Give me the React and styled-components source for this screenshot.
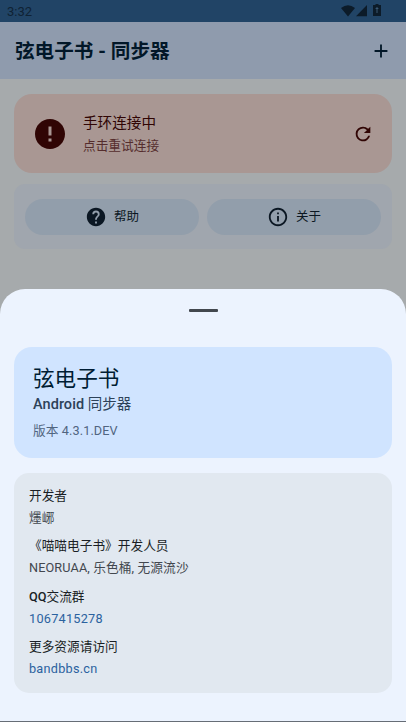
import React from "react";
import styled, { createGlobalStyle } from "styled-components";

const App = () => {
  return (
    <>
      <GlobalStyle />
      <Screen>
        <StatusBar>
          <Clock>3:32</Clock>
          <StatusIcons>
            <svg width="14" height="12" viewBox="0 0 14 12">
              <path d="M0 3Q7-2.6 14 3L7 11.5z" />
            </svg>
            <svg width="11" height="12" viewBox="0 0 11 12">
              <path d="M11 0v11.3H0z" />
            </svg>
            <BatteryIcon width="8" height="12" viewBox="0 0 8 12">
              <path d="M2.5 0h3v1H8v11H0V1h2.5z" />
              <path d="M4 3v6M2.6 4.5h2.8" stroke="#3a5873" fill="none" />
            </BatteryIcon>
          </StatusIcons>
        </StatusBar>
        <AppBar>
          <Title>弦电子书 - 同步器</Title>
          <svg width="22" height="22" viewBox="0 0 24 24">
            <path d="M19 13h-6v6h-2v-6H5v-2h6V5h2v6h6z" />
          </svg>
        </AppBar>
        <Content>
          <ErrorCard>
            <svg width="36" height="36" viewBox="0 0 24 24">
              <path d="M12 2C6.48 2 2 6.48 2 12s4.48 10 10 10 10-4.48 10-10S17.52 2 12 2zm1 15h-2v-2h2v2zm0-4h-2V7h2v6z" />
            </svg>
            <ErrorText>
              <ErrorTitle>手环连接中</ErrorTitle>
              <ErrorHint>点击重试连接</ErrorHint>
            </ErrorText>
            <svg width="22" height="22" viewBox="0 0 24 24">
              <path d="M17.65 6.35A7.958 7.958 0 0 0 12 4a8 8 0 1 0 7.73 10h-2.08A5.99 5.99 0 0 1 12 18a6 6 0 1 1 0-12c1.66 0 3.14.69 4.22 1.78L13 11h7V4z" />
            </svg>
          </ErrorCard>
          <ActionCard>
            <ActionButton>
              <svg width="22" height="22" viewBox="0 0 24 24">
                <path d="M12 2C6.48 2 2 6.48 2 12s4.48 10 10 10 10-4.48 10-10S17.52 2 12 2zm1 17h-2v-2h2v2zm2.07-7.75l-.9.92C13.45 12.9 13 13.5 13 15h-2v-.5c0-1.1.45-2.1 1.17-2.83l1.24-1.26c.37-.36.59-.86.59-1.41a2 2 0 1 0-4 0H8a4 4 0 1 1 8 0c0 .88-.36 1.68-.93 2.25z" />
              </svg>
              <ActionLabel>帮助</ActionLabel>
            </ActionButton>
            <ActionButton>
              <svg width="22" height="22" viewBox="0 0 24 24">
                <path d="M11 7h2v2h-2zm0 4h2v6h-2zm1-9C6.48 2 2 6.48 2 12s4.48 10 10 10 10-4.48 10-10S17.52 2 12 2zm0 18c-4.41 0-8-3.59-8-8s3.59-8 8-8 8 3.59 8 8-3.59 8-8 8z" />
              </svg>
              <ActionLabel>关于</ActionLabel>
            </ActionButton>
          </ActionCard>
        </Content>
        <Sheet>
          <Handle />
          <AppCard>
            <AppName>弦电子书</AppName>
            <AppKind>
              <Medium>Android</Medium> 同步器
            </AppKind>
            <Version>版本 4.3.1.DEV</Version>
          </AppCard>
          <InfoCard>
            <Label>开发者</Label>
            <Value>爅峫</Value>
            <Label>《喵喵电子书》开发人员</Label>
            <Value>NEORUAA, 乐色桶, 无源流沙</Value>
            <Label>
              <Medium>QQ</Medium>交流群
            </Label>
            <Value $link>1067415278</Value>
            <Label>更多资源请访问</Label>
            <Value $link>bandbbs.cn</Value>
          </InfoCard>
        </Sheet>
        <NavEdge />
      </Screen>
    </>
  );
};

export default App;

const GlobalStyle = createGlobalStyle`
  * {
    box-sizing: border-box;
  }
  body {
    margin: 0;
    font-family: Roboto, "Noto Sans CJK SC", sans-serif;
  }
  svg {
    display: block;
    flex-shrink: 0;
    fill: currentColor;
  }
`;
const Screen = styled.div`
  width: 406px;
  height: 722px;
  overflow: hidden;
  display: flex;
  flex-direction: column;
  background: #a6aaac;
`;
const StatusBar = styled.div`
  height: 22px;
  flex-shrink: 0;
  padding: 0 25px 0 7px;
  display: flex;
  justify-content: space-between;
  background: #214466;
  color: #0c1b29;
`;
const Clock = styled.span`
  font-size: 13px;
  line-height: 23px;
  color: #0f2234;
`;
const StatusIcons = styled.div`
  display: flex;
  align-items: flex-start;
  gap: 1px;
  padding-top: 5px;
`;
const BatteryIcon = styled.svg`
  margin: -1px 0 0 5px;
`;
const AppBar = styled.header`
  height: 57px;
  flex-shrink: 0;
  padding: 0 14px 0 15px;
  display: flex;
  align-items: center;
  justify-content: space-between;
  background: #8f9bad;
  color: #021728;
`;
const Title = styled.h1`
  margin: 0;
  padding-top: 2px;
  font-size: 19.6px;
  line-height: 28px;
  font-weight: 700;
`;
const Content = styled.main`
  height: 210px;
  flex-shrink: 0;
  padding: 15px 14px 0;
`;
const ErrorCard = styled.section`
  height: 79px;
  padding: 0 18px;
  border-radius: 18px;
  display: flex;
  align-items: center;
  background: #a99793;
  color: #300504;
`;
const ErrorText = styled.div`
  flex: 1;
  padding-left: 15px;
`;
const ErrorTitle = styled.div`
  padding-top: 1px;
  font-size: 14.6px;
  line-height: 23px;
`;
const ErrorHint = styled.div`
  font-size: 12.7px;
  line-height: 22px;
  color: #552d2d;
`;
const ActionCard = styled.section`
  height: 65px;
  margin-top: 11px;
  padding: 15px 11px 14px;
  border-radius: 11px;
  display: flex;
  gap: 8px;
  background: #a0a6ae;
`;
const ActionButton = styled.button`
  flex: 1;
  padding: 0;
  border: 0;
  border-radius: 18px;
  display: flex;
  align-items: center;
  justify-content: center;
  gap: 7px;
  background: #929eab;
  color: #0b1723;
  font-family: inherit;
  font-size: 12.5px;
`;
const ActionLabel = styled.span`
  padding-bottom: 4px;
`;
const Sheet = styled.section`
  height: 432px;
  flex-shrink: 0;
  padding: 20px 14px 0;
  border-radius: 25px 25px 0 0;
  background: #ecf3fe;
`;
const Handle = styled.div`
  width: 29px;
  height: 3px;
  margin: 0 auto 35px;
  border-radius: 1px;
  background: #42474e;
`;
const AppCard = styled.div`
  height: 111px;
  padding: 17px 19px;
  border-radius: 18px;
  background: #d0e4ff;
`;
const AppName = styled.h2`
  margin: 0;
  font-size: 21.6px;
  line-height: 29px;
  font-weight: 400;
  color: #001d34;
`;
const AppKind = styled.div`
  padding-top: 1px;
  font-size: 14.5px;
  line-height: 22px;
  letter-spacing: 0.05px;
  color: #2d4259;
`;
const Medium = styled.span`
  font-weight: 500;
`;
const Version = styled.div`
  margin-top: 5px;
  font-size: 12.7px;
  line-height: 20px;
  letter-spacing: 0.1px;
  color: #506580;
`;
const InfoCard = styled.div`
  height: 220px;
  margin-top: 15px;
  padding: 12px 15px;
  border-radius: 15px;
  background: #e1e8f0;
`;
const Label = styled.div`
  font-size: 12.7px;
  line-height: 22px;
  color: #1a1f25;
`;
const Value = styled.div`
  margin-bottom: 6.7px;
  font-size: 12.7px;
  line-height: 21.8px;
  letter-spacing: ${(props) => (props.$link ? "0.25px" : "0.12px")};
  color: ${(props) => (props.$link ? "#2b629f" : "#42474e")};
`;
const NavEdge = styled.div`
  height: 1px;
  flex-shrink: 0;
  background: #666d76;
`;
